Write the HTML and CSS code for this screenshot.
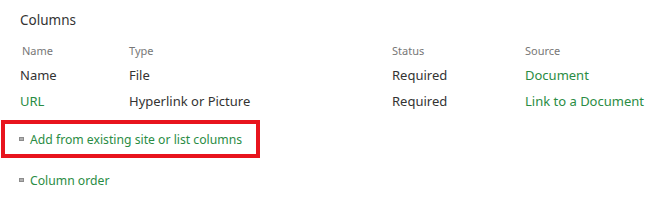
FILE: index.html
```html
<!DOCTYPE html>
<html lang="en">
<head>
    <meta charset="UTF-8">
    <title>Columns</title>
    <link rel="stylesheet" href="styles.css">
</head>
<body>
    <div class="columns-section">
        <div class="section-title">Columns</div>
        <table class="column-table">
            <thead>
                <tr>
                    <th class="col-name">Name</th>
                    <th class="col-type">Type</th>
                    <th class="col-status">Status</th>
                    <th class="col-source">Source</th>
                </tr>
            </thead>
            <tbody>
                <tr>
                    <td>Name</td>
                    <td>File</td>
                    <td>Required</td>
                    <td><a href="#">Document</a></td>
                </tr>
                <tr>
                    <td><a href="#">URL</a></td>
                    <td>Hyperlink or Picture</td>
                    <td>Required</td>
                    <td><a href="#">Link to a Document</a></td>
                </tr>
            </tbody>
        </table>

        <ul class="action-list">
            <li class="highlighted"><span class="bullet"></span><a href="#">Add from existing site or list columns</a></li>
            <li><span class="bullet"></span><a href="#">Column order</a></li>
        </ul>
    </div>
</body>
</html>
```

FILE: styles.css
```css
html, body {
    margin: 0;
    padding: 0;
    background: #fff;
}

body {
    font-family: "Noto Sans", "Open Sans", sans-serif;
    color: #333;
}

a {
    color: #2a8c44;
    text-decoration: none;
}

.columns-section {
    padding: 10px 0 0 0;
}

.section-title {
    font-size: 13.5px;
    line-height: 20px;
    color: #333;
    padding-left: 20px;
}

.column-table {
    border-collapse: collapse;
    margin: 9px 0 0 20px;
}

.column-table th {
    font-size: 11px;
    font-weight: normal;
    color: #777;
    text-align: left;
    height: 23px;
    padding: 0;
}

.column-table td {
    font-size: 13px;
    height: 26px;
    padding: 0;
    white-space: nowrap;
}

.col-name { width: 107px; padding-left: 2px !important; }
.col-type { width: 263px; }
.col-status { width: 133px; }

.action-list {
    list-style: none;
    margin: 6px 0 0 0;
    padding: 0;
}

.action-list li {
    font-size: 12.2px;
    white-space: nowrap;
    display: flex;
    align-items: center;
    gap: 6px;
    height: 30px;
    padding-left: 19px;
    border: 4px solid transparent;
    border-left-width: 0;
    width: 237px;
    margin-bottom: 3px;
}

.action-list li.highlighted {
    border: 4px solid #e8141d;
    margin-left: 1px;
    padding-left: 14px;
}

.bullet {
    width: 5px;
    height: 4px;
    background: #b0b0b0;
    box-shadow: inset 0 0 0 1px #8c8c8c;
    flex: none;
}
```
